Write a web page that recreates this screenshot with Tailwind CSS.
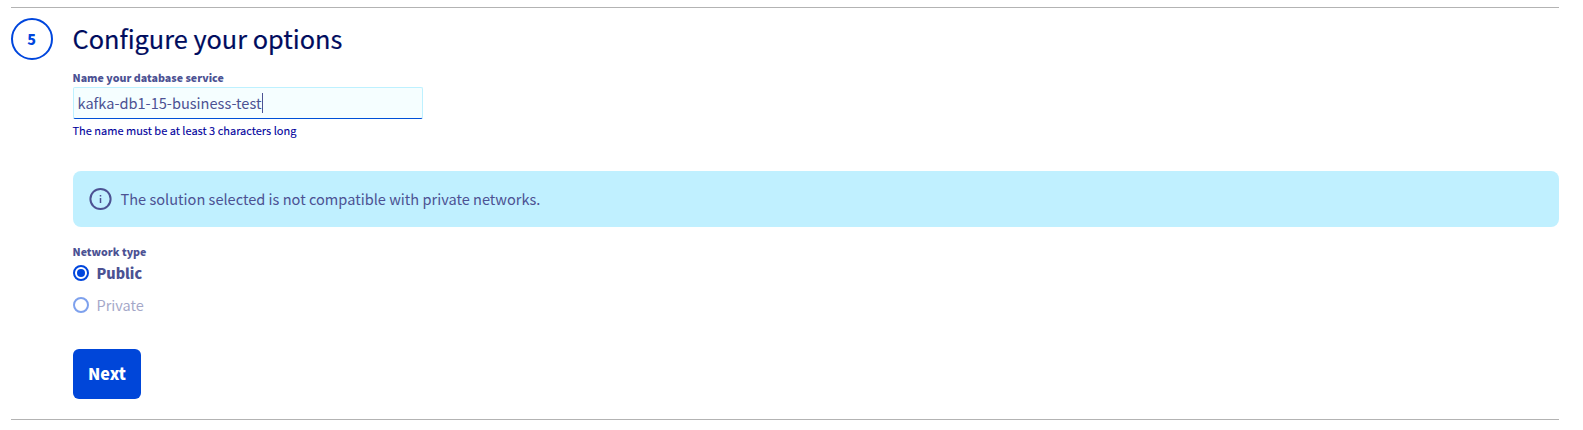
<!DOCTYPE html>
<html lang="en">
<head>
<meta charset="utf-8">
<title>Configure your options</title>
<script src="https://cdn.jsdelivr.net/npm/@tailwindcss/browser@4"></script>
</head>
<body class="bg-white font-['Noto_Sans_CJK_SC','Source_Sans_Pro',sans-serif] text-[#4c5293]">
<main class="ml-[11px] mt-[7px] flex h-[413px] w-[1548px] items-start border-y border-[#b3b3b3] pt-2.5">
  <div class="flex size-[42px] shrink-0 items-center justify-center rounded-full border-2 border-[#0046dd] pr-px text-[14.3px] font-black leading-none text-[#0046dd]">5</div>
  <section class="ml-5 flex flex-1 flex-col items-start whitespace-nowrap">
    <h2 class="-ml-[0.5px] h-[54px] text-[25.3px] leading-[41px] text-[#000c5e] [-webkit-text-stroke:0.2px_#000c5e]">Configure your options</h2>
    <label class="-ml-[0.5px] h-[15px] text-[10.65px] font-black leading-[12px]">Name your database service</label>
    <div class="flex h-8 w-[350px] items-center rounded-xs border border-[#bef1ff] border-b-[#0050d7] bg-[#f5feff] pl-1 text-[14.58px] leading-none"><span class="-ml-[0.5px] mr-px">kafka-db1-15-business-test</span><span class="h-5 w-px bg-[#4c5293]"></span></div>
    <p class="-ml-[0.5px] mt-[5px] mb-px text-[11px] leading-[12px] text-[#00009c] [-webkit-text-stroke:0.1px_#00009c]">The name must be at least 3 characters long</p>
    <div class="mt-[34px] flex h-14 w-full items-center rounded-lg bg-[#c0f0ff] pl-4 text-[14.58px] leading-none">
      <svg class="mr-[7.5px] size-6" viewBox="0 0 24 24" fill="none" stroke="currentColor" stroke-width="2"><circle cx="11.5" cy="12" r="10.1"/><path d="M11.5 11v5M11.5 8v1.5" stroke-width="1.5"/></svg>
      <span>The solution selected is not compatible with private networks.</span>
    </div>
    <div class="-ml-[0.5px] mt-[19px] h-[17px] text-[10.65px] font-black leading-[12px]">Network type</div>
    <div class="mt-0.5 flex h-4 items-center gap-[7.5px] text-[14.3px] font-black leading-none"><svg class="size-4" viewBox="0 0 16 16"><circle cx="8" cy="8" r="7" fill="none" stroke="#0046dd" stroke-width="2"/><circle cx="8" cy="8" r="4" fill="#0046dd"/></svg><span>Public</span></div>
    <div class="mt-4 flex h-4 items-center gap-[7.5px] text-[14.5px] leading-none opacity-50"><svg class="size-4" viewBox="0 0 16 16"><circle cx="8" cy="8" r="7" fill="none" stroke="#0046dd" stroke-width="2"/></svg><span>Private</span></div>
    <button class="mt-9 flex h-[50px] w-[68px] items-center justify-center rounded-md bg-[#0046d9] pb-0.5 text-[16.1px] font-black leading-none text-white">Next</button>
  </section>
</main>
</body>
</html>
